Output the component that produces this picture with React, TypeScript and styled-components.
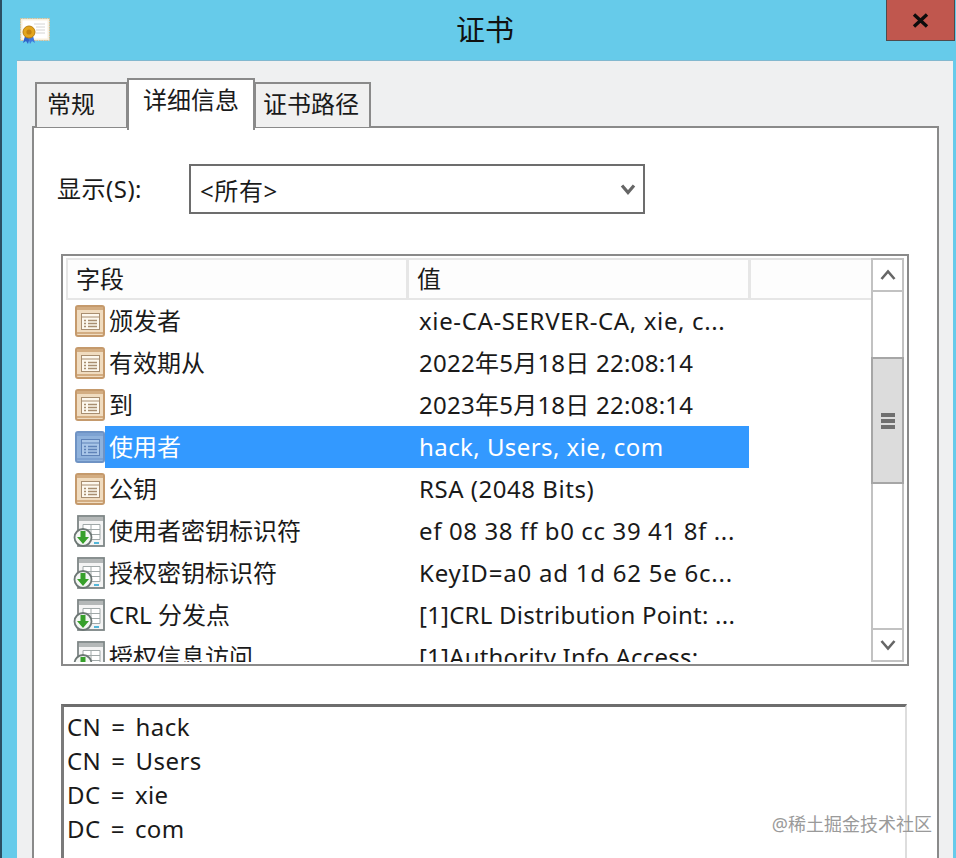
import styled, { createGlobalStyle } from "styled-components";

const GlobalStyle = createGlobalStyle`
  html, body {
    margin: 0;
    padding: 0;
    background: #66cbea;
  }
`;

type Field = {
  name: string;
  value: string;
  kind: "doc" | "ext";
  spacing: number;
  selected?: boolean;
};

const FIELDS: Field[] = [
  { name: "颁发者", value: "xie-CA-SERVER-CA, xie, c...", kind: "doc", spacing: 0.63 },
  { name: "有效期从", value: "2022年5月18日 22:08:14", kind: "doc", spacing: 0.25 },
  { name: "到", value: "2023年5月18日 22:08:14", kind: "doc", spacing: 0.25 },
  { name: "使用者", value: "hack, Users, xie, com", kind: "doc", spacing: 0.43, selected: true },
  { name: "公钥", value: "RSA (2048 Bits)", kind: "doc", spacing: 0.53 },
  { name: "使用者密钥标识符", value: "ef 08 38 ff b0 cc 39 41 8f ...", kind: "ext", spacing: 0.63 },
  { name: "授权密钥标识符", value: "KeyID=a0 ad 1d 62 5e 6c...", kind: "ext", spacing: 0.77 },
  { name: "CRL 分发点", value: "[1]CRL Distribution Point: ...", kind: "ext", spacing: 0.23 },
  { name: "授权信息访问", value: "[1]Authority Info Access: ...", kind: "ext", spacing: 0.2 },
];

const SUBJECT = ["CN = hack", "CN = Users", "DC = xie", "DC = com"];

function CertIcon() {
  return (
    <TitleIcon width="30" height="27" viewBox="0 0 30 27">
      <rect x="0.5" y="0.5" width="29" height="22" fill="#f8efdc" stroke="#d6bd92" strokeDasharray="1.5 1" />
      <rect x="2.500" y="2.500" width="25" height="18" fill="#fff" />
      <path d="M14 6h11M16 9h9M16 12h9M16 15h9" stroke="#d4d4d4" />
      <path d="M5 18l-2 7 3-2 2 3 2-7z" fill="#2f62c8" />
      <path d="M13 18l2 7-3-2-2 3-2-7z" fill="#3f78dc" />
      <circle cx="9" cy="14" r="6" fill="#e3a51c" stroke="#b97f10" />
      <circle cx="9" cy="14" r="2.600" fill="#c4820e" />
    </TitleIcon>
  );
}

function DocIcon({ selected }: { selected?: boolean }) {
  const edge = selected ? "#6f93c4" : "#c59a6c";
  const band = selected ? "#7da2d2" : "#d3ad82";
  const fill = selected ? "#8fb2dc" : "#f0dcc0";
  const inner = selected ? "#a9c6e8" : "#fdf8ee";
  const line = selected ? "#5f83b8" : "#a88e70";
  return (
    <RowIcon width="30" height="32" viewBox="0 0 30 32">
      <rect x="1" y="1" width="28" height="30" rx="2" fill={fill} stroke={edge} strokeWidth="2" />
      <path d="M2 3.500h26" stroke={band} strokeWidth="3" />
      <path d="M2 28h26" stroke={band} strokeWidth="2" />
      <rect x="6.500" y="8.500" width="18" height="16" fill={inner} stroke={line} />
      <path d="M7 12h17" stroke={line} />
      <path d="M9 15.500h2M13 15.500h9M9 18.500h2M13 18.500h9M9 21.500h2M13 21.500h9" stroke={line} strokeWidth="1.500" />
    </RowIcon>
  );
}

function ExtIcon() {
  return (
    <RowIcon width="32" height="32" viewBox="0 0 32 32">
      <rect x="5" y="1" width="26" height="30" fill="#f4f4f4" stroke="#7d8585" strokeWidth="1.800" />
      <rect x="6" y="2" width="24" height="4" fill="#b4b8b8" />
      <path d="M10 9.500h17v15h-17zM10 14.500h17M10 19.500h17M18 9.500v15" fill="#fff" stroke="#a0a8a8" />
      <path d="M21 28h5" stroke="#53b6d8" strokeWidth="2" />
      <circle cx="10" cy="22.500" r="8.500" fill="#f4f7f4" stroke="#6d7775" strokeWidth="1.800" />
      <path d="M7.500 16h5v6h3.500l-6 7-6-7h3.500z" fill="#37a02b" />
    </RowIcon>
  );
}

export default function App() {
  return (
    <>
      <GlobalStyle />
      <Page>
        <TitleBar>
          <CertIcon />
          <Title>证书</Title>
          <CloseButton>
            <svg width="17" height="15" viewBox="0 0 17 15">
              <path d="M2 1.500l13 12M15 1.500l-13 12" stroke="#0c0c0c" strokeWidth="3.400" fill="none" />
            </svg>
          </CloseButton>
        </TitleBar>
        <Dialog>
          <TabRow>
            <Tab $width={93}>常规</Tab>
            <Tab $width={128} $active>详细信息</Tab>
            <Tab $width={117}>证书路径</Tab>
          </TabRow>
          <Panel>
            <FormRow>
              <ShowLabel>显示(S):</ShowLabel>
              <Select>
                <span>&lt;所有&gt;</span>
                <svg width="16" height="13" viewBox="0 0 16 13">
                  <path d="M2 2.500l6 7 6-7" stroke="#666" strokeWidth="3.200" fill="none" />
                </svg>
              </Select>
            </FormRow>
            <ListBox>
              <ListMain>
                <ListHeader>
                  <HeaderCell $width={341}>字段</HeaderCell>
                  <HeaderCell $width={342}>值</HeaderCell>
                </ListHeader>
                <Rows>
                  {FIELDS.map((f) => (
                    <Row key={f.name}>
                      {f.kind === "doc" ? <DocIcon selected={f.selected} /> : <ExtIcon />}
                      <RowBody $selected={f.selected}>
                        <NameCell>{f.name}</NameCell>
                        <ValueCell $spacing={f.spacing}>{f.value}</ValueCell>
                      </RowBody>
                    </Row>
                  ))}
                </Rows>
              </ListMain>
              <ScrollBar>
                <ArrowBox>
                  <svg width="16" height="12" viewBox="0 0 16 12">
                    <path d="M1.500 10l6.500-7.500 6.500 7.500" stroke="#666" strokeWidth="2.600" fill="none" />
                  </svg>
                </ArrowBox>
                <Track $height={65} />
                <Thumb>
                  <Grip />
                  <Grip />
                  <Grip />
                </Thumb>
                <Track $height={144} />
                <ArrowBox>
                  <svg width="16" height="12" viewBox="0 0 16 12">
                    <path d="M1.500 2l6.500 7.500 6.500-7.500" stroke="#666" strokeWidth="2.600" fill="none" />
                  </svg>
                </ArrowBox>
              </ScrollBar>
            </ListBox>
            <DetailBox>
              {SUBJECT.map((line) => (
                <DetailLine key={line}>{line}</DetailLine>
              ))}
            </DetailBox>
          </Panel>
        </Dialog>
        <Watermark>@稀土掘金技术社区</Watermark>
      </Page>
    </>
  );
}

const Page = styled.div`
  position: relative;
  width: 956px;
  height: 858px;
  overflow: hidden;
  box-sizing: border-box;
  border-left: 2px solid #2b4f63;
  background: #66cbea;
  font-family: "Noto Sans", "Noto Sans CJK SC", sans-serif;
  color: #1a1a1a;
`;

const TitleBar = styled.div`
  display: grid;
  grid-template-columns: 1fr auto 1fr;
  height: 60px;
  padding-left: 12px;
  box-sizing: border-box;
`;

const TitleIcon = styled.svg`
  margin: 18px 0 0 6px;
`;

const Title = styled.div`
  font-size: 29px;
  line-height: 59px;
  color: #111;
`;

const CloseButton = styled.div`
  justify-self: end;
  display: flex;
  align-items: center;
  justify-content: center;
  box-sizing: border-box;
  width: 69px;
  height: 41px;
  margin-right: 1px;
  background: #c0574e;
  border: 1px solid #4f4a4c;
  border-top: 0;
`;

const Dialog = styled.div`
  height: 798px;
  margin: 0 3px 0 15px;
  padding-top: 18px;
  box-sizing: border-box;
  background: #eff0f1;
  box-shadow: inset 0 1px 0 #82b8cf;
`;

const TabRow = styled.div`
  display: flex;
  align-items: flex-start;
  height: 48px;
  padding-left: 18px;
`;

const Tab = styled.div<{ $width: number; $active?: boolean }>`
  position: relative;
  z-index: ${({ $active }) => ($active ? 1 : 0)};
  box-sizing: border-box;
  width: ${({ $width }) => $width}px;
  height: ${({ $active }) => ($active ? 52 : 45)}px;
  margin-top: ${({ $active }) => ($active ? 0 : 4)}px;
  margin-left: -1px;
  padding-left: ${({ $active }) => ($active ? 14 : 7)}px;
  background: ${({ $active }) => ($active ? "#fff" : "#f0f0f0")};
  border: 2px solid #8a8a8a;
  border-bottom: 0;
  font-size: 24px;
  line-height: 40px;
  &:first-child {
    margin-left: 0;
    padding-left: 10px;
  }
`;

const Panel = styled.div`
  box-sizing: border-box;
  width: 907px;
  height: 760px;
  margin-left: 15px;
  padding-top: 36px;
  background: #fff;
  border: 2px solid #8a8a8a;
`;

const FormRow = styled.div`
  display: flex;
  align-items: center;
  margin-left: 23px;
`;

const ShowLabel = styled.div`
  width: 132px;
  font-size: 24px;
  line-height: 50px;
  letter-spacing: 0.5px;
`;

const Select = styled.div`
  display: flex;
  align-items: center;
  justify-content: space-between;
  box-sizing: border-box;
  width: 456px;
  height: 50px;
  padding: 0 7px 0 9px;
  border: 2px solid #6d6d6d;
  font-size: 24px;
  letter-spacing: 0.6px;
`;

const ListBox = styled.div`
  display: flex;
  box-sizing: border-box;
  width: 848px;
  height: 412px;
  margin: 40px 0 0 27px;
  padding: 2px 3px 2px 3px;
  border: 2px solid #8a8a8a;
`;

const ListMain = styled.div`
  width: 805px;
  overflow: hidden;
`;

const ListHeader = styled.div`
  display: flex;
  box-sizing: border-box;
  height: 42px;
  background: #fdfdfd;
  border: solid #e6e6e6;
  border-width: 2px 0 2px 2px;
`;

const HeaderCell = styled.div<{ $width: number }>`
  box-sizing: border-box;
  width: ${({ $width }) => $width}px;
  padding-left: 8px;
  border-right: 3px solid #e6e6e6;
  font-size: 24px;
  line-height: 38px;
`;

const Rows = styled.div`
  height: 362px;
  overflow: hidden;
`;

const Row = styled.div`
  display: flex;
  align-items: center;
  height: 42px;
  padding-left: 9px;
`;

const RowIcon = styled.svg`
  flex: none;
  margin-left: ${({ width }) => (width === "32" ? -2 : 0)}px;
`;

const RowBody = styled.div<{ $selected?: boolean }>`
  display: flex;
  width: 644px;
  height: 42px;
  font-size: 24px;
  line-height: 42px;
  white-space: nowrap;
  background: ${({ $selected }) => ($selected ? "#3399ff" : "transparent")};
  color: ${({ $selected }) => ($selected ? "#fff" : "inherit")};
`;

const NameCell = styled.div`
  width: 302px;
  padding-left: 4px;
  box-sizing: border-box;
`;

const ValueCell = styled.div<{ $spacing: number }>`
  width: 342px;
  padding-left: 12px;
  box-sizing: border-box;
  letter-spacing: ${({ $spacing }) => $spacing}px;
`;

const ScrollBar = styled.div`
  display: flex;
  flex-direction: column;
  width: 33px;
  height: 404px;
`;

const ArrowBox = styled.div`
  display: flex;
  align-items: center;
  justify-content: center;
  box-sizing: border-box;
  height: 34px;
  border: 2px solid #c2c2c2;
`;

const Track = styled.div<{ $height: number }>`
  box-sizing: border-box;
  height: ${({ $height }) => $height}px;
  border: solid #c2c2c2;
  border-width: 0 2px;
`;

const Thumb = styled.div`
  display: flex;
  flex-direction: column;
  align-items: center;
  justify-content: center;
  gap: 2px;
  box-sizing: border-box;
  height: 127px;
  background: #dcdcdc;
  border: 2px solid #a6a6a6;
`;

const Grip = styled.div`
  width: 14px;
  height: 4px;
  background: #6f6f6f;
`;

const DetailBox = styled.div`
  box-sizing: border-box;
  width: 846px;
  height: 220px;
  margin: 38px 0 0 27px;
  padding: 3px 0 0 3px;
  border: solid;
  border-width: 3px 2px 0 3px;
  border-color: #6d6d6d #dddddd #7a7a7a #7a7a7a;
`;

const DetailLine = styled.div`
  font-size: 24px;
  line-height: 34px;
  letter-spacing: 0.4px;
  word-spacing: 3.5px;
`;

const Watermark = styled.div`
  position: absolute;
  right: 24px;
  top: 812px;
  font-size: 18px;
  line-height: 24px;
  color: #9a9a9a;
`;
